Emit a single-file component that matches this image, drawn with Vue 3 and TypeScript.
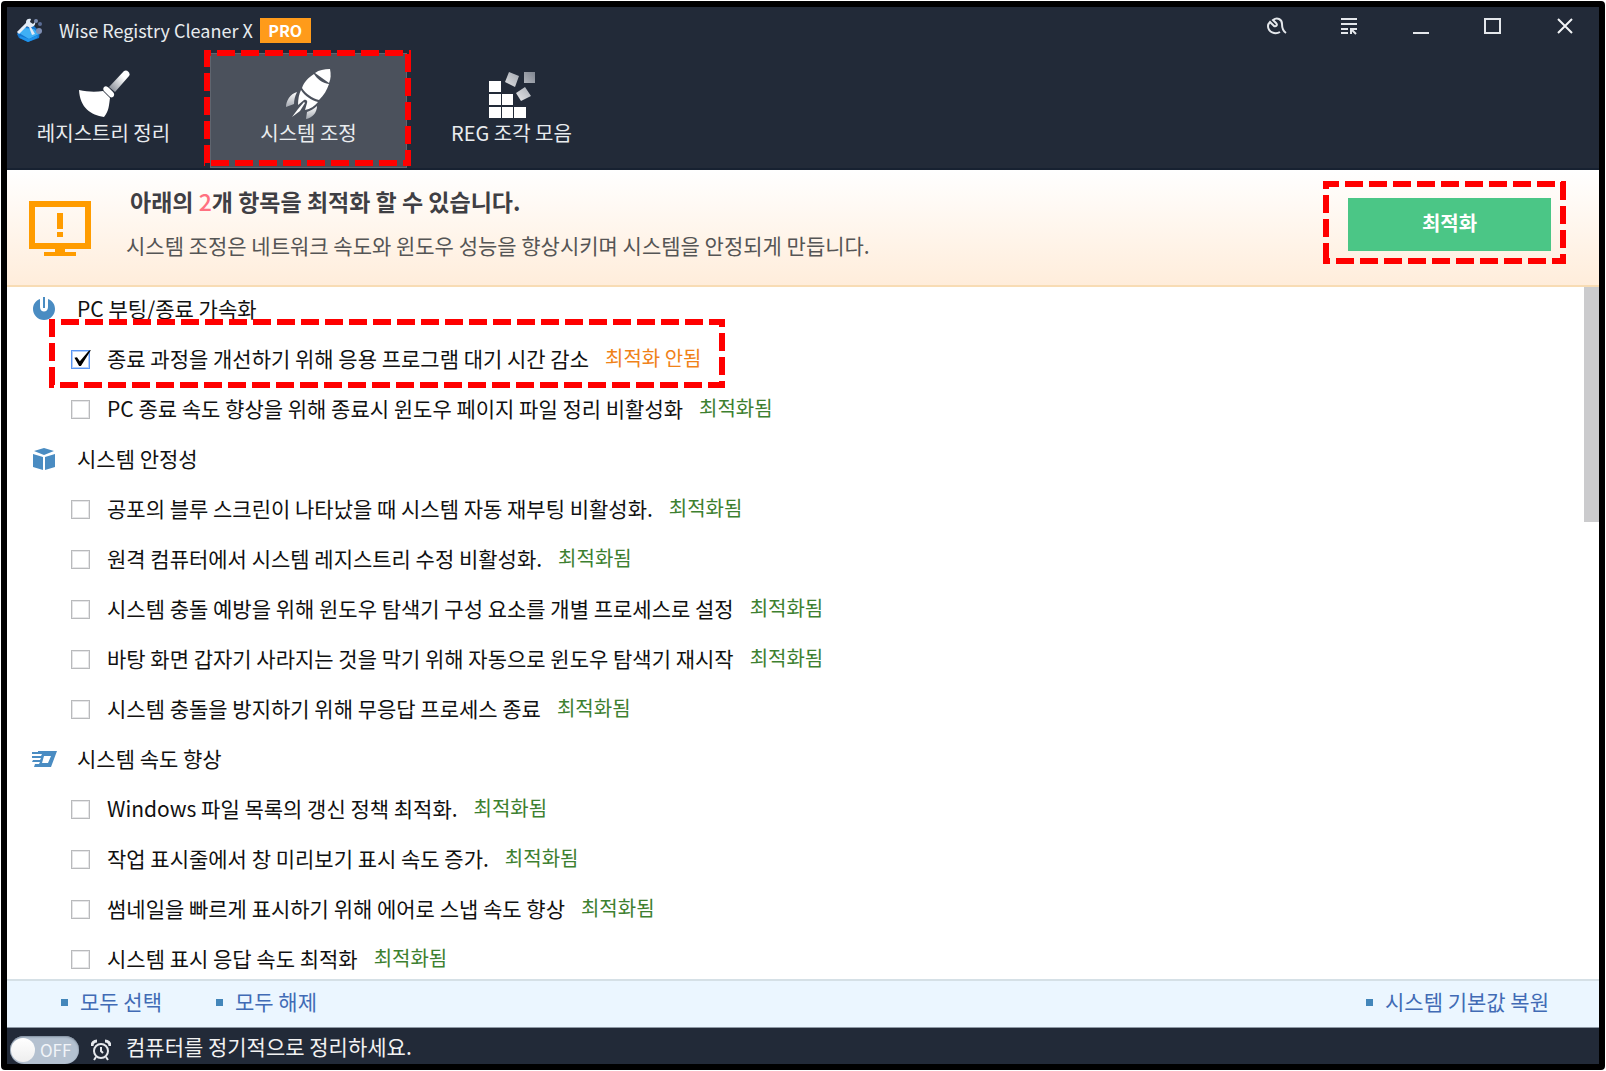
<script setup lang="ts">
import { ref } from 'vue'

interface Tweak {
  label: string
  checked: boolean
  done: boolean
  marked?: boolean
}
interface Group {
  title: string
  icon: 'power' | 'box' | 'speed'
  tweaks: Tweak[]
}

const tweak = (label: string): Tweak => ({ label, checked: false, done: true })

const groups = ref<Group[]>([
  {
    title: 'PC 부팅/종료 가속화',
    icon: 'power',
    tweaks: [
      { label: '종료 과정을 개선하기 위해 응용 프로그램 대기 시간 감소', checked: true, done: false, marked: true },
      tweak('PC 종료 속도 향상을 위해 종료시 윈도우 페이지 파일 정리 비활성화'),
    ],
  },
  {
    title: '시스템 안정성',
    icon: 'box',
    tweaks: [
      tweak('공포의 블루 스크린이 나타났을 때 시스템 자동 재부팅 비활성화.'),
      tweak('원격 컴퓨터에서 시스템 레지스트리 수정 비활성화.'),
      tweak('시스템 충돌 예방을 위해 윈도우 탐색기 구성 요소를 개별 프로세스로 설정'),
      tweak('바탕 화면 갑자기 사라지는 것을 막기 위해 자동으로 윈도우 탐색기 재시작'),
      tweak('시스템 충돌을 방지하기 위해 무응답 프로세스 종료'),
    ],
  },
  {
    title: '시스템 속도 향상',
    icon: 'speed',
    tweaks: [
      tweak('Windows 파일 목록의 갱신 정책 최적화.'),
      tweak('작업 표시줄에서 창 미리보기 표시 속도 증가.'),
      tweak('썸네일을 빠르게 표시하기 위해 에어로 스냅 속도 향상'),
      tweak('시스템 표시 응답 속도 최적화'),
    ],
  },
])

const scheduled = ref(false)

function setAll(value: boolean) {
  groups.value.forEach((g) => g.tweaks.forEach((t) => (t.checked = value)))
}
</script>

<template>
  <div class="window">
    <header class="head">
      <div class="titlebar">
        <svg class="logo" viewBox="0 0 26 26" aria-hidden="true">
          <path d="M1 17l5-7 12-1 6 6-1 6-11 4-9-4z" fill="#1677cf" />
          <path d="M3 16l6-5 9 1 5 5-10 5z" fill="#3fb0f5" />
          <path d="M4 19l9 3 9-4-1 3-9 4-8-4z" fill="#1f93ea" />
          <path d="M2 16L12 6" fill="none" stroke="#e6eef8" stroke-width="3" />
          <path d="M10 5c0-3 3-4 5-3l-1 3 3 2 2-2c1 3-2 5-4 5l4 7-3 1-3-8c-2 0-3-2-3-5z" fill="#e2ebf6" />
          <circle cx="20" cy="4" r="2" fill="#7b8cb0" />
          <circle cx="24" cy="7" r="2" fill="#5a6c94" />
          <circle cx="23" cy="14" r="3" fill="#7f8fb4" />
        </svg>
        <h1 class="app-name">Wise Registry Cleaner X</h1>
        <span class="pro">PRO</span>
        <div class="controls">
          <button type="button" aria-label="도구">
            <svg viewBox="0 0 20 18" fill="none" stroke="#e4e7eb" stroke-width="2">
              <path d="M13 15C8 18 1 15 1 9c0-2 1-3 2-4l4 4c2 1 4-1 2-3L6 3c4-3 9-1 9 4 0 3 1 7 4 9" />
            </svg>
          </button>
          <button type="button" aria-label="메뉴">
            <svg viewBox="0 0 20 18" fill="none" stroke="#e4e7eb" stroke-width="2">
              <path d="M2 2h16M2 7h16M2 12h7M2 16h7M12 17v-5h6M12 12l5 5" />
            </svg>
          </button>
          <button type="button" aria-label="최소화">
            <svg viewBox="0 0 20 18" fill="none" stroke="#e4e7eb" stroke-width="2"><path d="M2 16h16" /></svg>
          </button>
          <button type="button" aria-label="최대화">
            <svg viewBox="0 0 20 18" fill="none" stroke="#e4e7eb" stroke-width="2"><path d="M2 2h15v14H2z" /></svg>
          </button>
          <button type="button" aria-label="닫기">
            <svg viewBox="0 0 20 18" fill="none" stroke="#f2f4f6" stroke-width="2"><path d="M3 2l14 14M17 2L3 16" /></svg>
          </button>
        </div>
      </div>

      <nav class="tabs">
        <button type="button" class="tab">
          <svg class="tab-icon" viewBox="0 0 52 50" aria-hidden="true">
            <defs>
              <linearGradient id="handle" x1="1" y1="0" x2="0" y2="1">
                <stop offset="0.3" stop-color="#fff" />
                <stop offset="1" stop-color="#777d88" />
              </linearGradient>
            </defs>
            <path d="M46 2c3-2 7 2 5 5L37 23l-6-5z" fill="url(#handle)" />
            <path d="M26 18c2-2 4 0 5 1l4 4c1 1 2 3 0 5-2 1-3 0-4-1l-5-5c-1-1-1-3 0-4z" fill="#fff" />
            <path d="M1 21c9 2 17 2 24 1l7 7c-1 7-1 13-6 19C13 46 2 39 1 21z" fill="#fff" />
          </svg>
          <span>레지스트리 정리</span>
        </button>
        <button type="button" class="tab active">
          <svg class="tab-icon" viewBox="0 0 52 50" aria-hidden="true">
            <defs>
              <linearGradient id="fin" x1="0" y1="0" x2="0" y2="1">
                <stop offset="0" stop-color="#fff" />
                <stop offset="1" stop-color="#a2a7af" />
              </linearGradient>
            </defs>
            <path d="M47 0c-6 0-11 1-15 4l14 10c2-4 2-9 1-14z" fill="#fff" />
            <path d="M31 5c-6 4-10 8-12 14 4 6 10 10 17 12 5-5 8-10 10-16C39 14 34 10 31 5z" fill="#fff" />
            <path d="M18 21c-2 4-3 9-3 15l6-5c2-1 4 1 3 3l-2 7c5-1 10-4 13-8-7-2-13-6-17-12z" fill="#fff" />
            <path d="M14 23C7 25 3 32 3 38l8-3c0-4 1-8 3-12z" fill="url(#fin)" />
            <path d="M34 37c-3 3-7 5-10 6l-1 7c6-1 11-6 11-13z" fill="url(#fin)" />
            <path d="M21 33l-6 7-6 8 8-6 5-8z" fill="#fff" />
          </svg>
          <span>시스템 조정</span>
          <svg class="marker tab-marker" aria-hidden="true">
            <line x1="0" y1="3" x2="100%" y2="3" stroke-dashoffset="-13" />
            <line x1="0" y1="3" x2="0" y2="100%" class="right" stroke-dashoffset="-1" />
            <line x1="0" y1="100%" x2="100%" y2="100%" class="bottom" stroke-dashoffset="-7" />
            <line x1="3" y1="0" x2="3" y2="100%" stroke-dashoffset="-23" />
          </svg>
        </button>
        <button type="button" class="tab">
          <svg class="tab-icon" viewBox="0 0 52 50" aria-hidden="true">
            <defs>
              <linearGradient id="block" x1="0" y1="1" x2="1" y2="0">
                <stop offset="0" stop-color="#fff" />
                <stop offset="1" stop-color="#7f8590" />
              </linearGradient>
            </defs>
            <path d="M3 12h12v11H3zM3 25h12v11H3zM16 25h11v11H16zM3 38h12v11H3zM16 38h11v11H16zM28 38h12v11H28z" fill="#fff" />
            <path d="M23 3l10 4-4 11-10-5zM30 24l9-6 6 9-10 5zM38 3h11v11H38z" fill="url(#block)" />
          </svg>
          <span>REG 조각 모음</span>
        </button>
      </nav>
    </header>

    <section class="banner">
      <svg class="monitor" viewBox="0 0 64 56" fill="#ff9c00" aria-hidden="true">
        <path fill-rule="evenodd" d="M1 1h62v48H37v3h11v4H16v-4h11v-3H1zM7 7v36h50V7z" />
        <path d="M29 13h6v16h-6zM29 32h6v5h-6z" />
      </svg>
      <div class="message">
        <h2>아래의 <em>2</em>개 항목을 최적화 할 수 있습니다.</h2>
        <p>시스템 조정은 네트워크 속도와 윈도우 성능을 향상시키며 시스템을 안정되게 만듭니다.</p>
      </div>
      <div class="action">
        <button type="button" class="optimize">최적화</button>
        <svg class="marker action-marker" aria-hidden="true">
          <line x1="0" y1="3" x2="100%" y2="3" stroke-dashoffset="-22" />
          <line x1="0" y1="0" x2="0" y2="100%" class="right" stroke-dashoffset="-1" />
          <line x1="0" y1="100%" x2="100%" y2="100%" class="bottom" stroke-dashoffset="-13" />
          <line x1="3" y1="0" x2="3" y2="100%" stroke-dashoffset="-14" />
        </svg>
      </div>
    </section>

    <main class="body">
      <div class="list">
        <template v-for="(group, g) in groups" :key="group.title">
          <div class="row group">
            <svg class="group-icon" viewBox="0 0 26 24" fill="#4a8cc2" aria-hidden="true">
              <template v-if="group.icon === 'power'">
                <path d="M9 2v8c0 6 8 6 8 0V2c5 2 7 6 7 10a11 11 0 0 1-22 0C2 8 4 4 9 2z" />
                <path d="M12 0h2v11h-2z" />
              </template>
              <template v-else-if="group.icon === 'box'">
                <path d="M13 1l10 3-10 4L3 4zM2 7l10 3v13L2 20zM24 7l-10 3v13l10-3z" />
              </template>
              <template v-else>
                <path fill-rule="evenodd" d="M7 4h19l-6 16H3l1-3h4l1-2H1l1-2h7l1-2H1V9h9l1-2H1V5h6zM13 9l-2 7h6l3-7z" />
              </template>
            </svg>
            <h3>{{ group.title }}</h3>
          </div>
          <div v-for="(item, i) in group.tweaks" :key="item.label" class="row item">
            <input :id="`tweak-${g}-${i}`" v-model="item.checked" type="checkbox" class="check" />
            <label :for="`tweak-${g}-${i}`">{{ item.label }}</label>
            <span class="state" :class="{ pending: !item.done }">{{ item.done ? '최적화됨' : '최적화 안됨' }}</span>
            <svg v-if="item.marked" class="marker row-marker" aria-hidden="true">
              <line x1="0" y1="3" x2="100%" y2="3" stroke-dashoffset="-12" />
              <line x1="0" y1="0" x2="0" y2="100%" class="right" stroke-dashoffset="-14" />
              <line x1="0" y1="100%" x2="100%" y2="100%" class="bottom" stroke-dashoffset="-11" />
              <line x1="3" y1="0" x2="3" y2="100%" stroke-dashoffset="0" />
            </svg>
          </div>
        </template>
      </div>
      <div class="scroll"><div class="thumb"></div></div>
    </main>

    <div class="links">
      <a href="#all" @click.prevent="setAll(true)">모두 선택</a>
      <a href="#none" @click.prevent="setAll(false)">모두 해제</a>
      <a href="#restore" class="restore">시스템 기본값 복원</a>
    </div>

    <footer class="status">
      <label class="toggle">
        <input v-model="scheduled" type="checkbox" role="switch" aria-label="예약 정리" />
        <span>OFF</span>
      </label>
      <svg class="alarm" viewBox="0 0 20 22" fill="none" stroke="#e6e9ed" stroke-width="2" aria-hidden="true">
        <circle cx="10" cy="12" r="7" />
        <path d="M10 8v4l2 2M5 18l-2 3M15 18l2 3" />
        <path d="M1 7c0-3 2-5 5-5M19 7c0-3-2-5-5-5" stroke-width="3" />
      </svg>
      <span>컴퓨터를 정기적으로 정리하세요.</span>
    </footer>
  </div>
</template>

<style>
body {
  margin: 0;
  background: #fff;
}
</style>

<style scoped>
* {
  box-sizing: border-box;
}
.window {
  display: flex;
  flex-direction: column;
  height: calc(100vh - 2px);
  margin: 1px;
  border: 6px solid #000;
  border-radius: 4px;
  background: #fff;
  color: #111;
  font: 21px/30px "Noto Sans CJK KR", sans-serif;
  white-space: nowrap;
}
button {
  padding: 0;
  border: 0;
  background: none;
  color: inherit;
  font: inherit;
}
h1, h2, h3, p {
  margin: 0;
  font: inherit;
}

.head {
  flex: none;
  background: #222a38;
  border-bottom: 2px solid #172131;
  color: #e9ecef;
}
.titlebar {
  display: flex;
  align-items: center;
  height: 46px;
  padding-left: 9px;
}
.logo {
  width: 26px;
  height: 26px;
}
.app-name {
  margin-left: 17px;
  font-size: 18px;
}
.pro {
  width: 51px;
  margin-left: 7px;
  background: #ff9b1a;
  color: #fff;
  font: bold 16px/25px "Noto Sans CJK KR", sans-serif;
  text-align: center;
}
.controls {
  display: flex;
  gap: 4px;
  align-self: flex-start;
  margin-left: auto;
}
.controls button {
  display: grid;
  place-items: center;
  width: 68px;
  height: 38px;
}
.controls svg {
  width: 20px;
  height: 18px;
}

.tabs {
  display: flex;
  gap: 6px;
}
.tab {
  position: relative;
  display: flex;
  flex-direction: column;
  align-items: center;
  width: 197px;
  height: 115px;
  padding-top: 16px;
  font-size: 20px;
  line-height: 28px;
}
.tab:first-child {
  padding-right: 4px;
}
.tab.active {
  background: #4b515c;
  box-shadow: inset 0 0 0 1px #5f656f;
}
.tab-icon {
  width: 52px;
  height: 50px;
}

.marker {
  position: absolute;
  overflow: visible;
  pointer-events: none;
  stroke: #f00;
  stroke-width: 6px;
  stroke-dasharray: 18 6;
}
.marker .right {
  transform: translateX(calc(100% - 3px));
}
.marker .bottom {
  transform: translateY(-3px);
}
.tab-marker {
  top: -3px;
  left: -6px;
  width: 207px;
  height: 116px;
}

.banner {
  display: flex;
  flex: none;
  align-items: flex-start;
  height: 117px;
  padding: 14px 48px 0 21px;
  border-bottom: 2px solid #f8dcb4;
  background: linear-gradient(#fff, #ffeddb);
}
.monitor {
  width: 64px;
  height: 56px;
  margin-top: 16px;
}
.message {
  display: flex;
  flex-direction: column;
  gap: 14px;
  padding: 2px 0 0 34px;
  color: #555;
}
.message h2 {
  padding-left: 4px;
  color: #3f3f44;
  font-size: 23px;
  font-weight: bold;
}
.message em {
  color: #ff7080;
  font-style: normal;
  font-weight: 500;
}
.action {
  position: relative;
  margin: 14px 0 0 auto;
}
.optimize {
  display: block;
  width: 203px;
  height: 53px;
  padding-bottom: 4px;
  background: #4bc686;
  color: #fff;
  font-size: 20px;
  font-weight: bold;
}
.action-marker {
  top: -17px;
  left: -25px;
  width: 243px;
  height: 83px;
}

.body {
  display: flex;
  flex: 1;
  min-height: 0;
}
.list {
  display: flex;
  flex: 1;
  flex-direction: column;
  gap: 6px;
  overflow: hidden;
}
.row {
  position: relative;
  display: flex;
  flex: none;
  align-items: center;
  height: 44px;
}
.row h3,
.row label,
.state {
  padding-bottom: 2px;
}
.group {
  padding-left: 24px;
}
.group-icon {
  width: 26px;
  height: 24px;
  margin-right: 20px;
}
.item {
  align-self: flex-start;
  padding-left: 64px;
}
.check {
  position: relative;
  width: 19px;
  height: 19px;
  margin: 1px 17px 0 0;
  appearance: none;
  border: 1px solid #b9babc;
  background: #fff;
  outline: 1px solid #e6e6e8;
  outline-offset: -2px;
}
.check:checked {
  border-color: #5b97f5;
  outline-color: #b5d0fb;
}
.check:checked::after {
  content: "";
  position: absolute;
  inset: -1px -2px 1px 1px;
  background: #000;
  clip-path: polygon(8% 46%, 22% 42%, 38% 66%, 88% 4%, 100% 0, 44% 94%, 34% 94%);
}
.state {
  margin-left: 16px;
  color: #3d8030;
  font-size: 20px;
}
.state.pending {
  color: #f08218;
}
.row-marker {
  top: -18px;
  left: 42px;
  width: 676px;
  height: 69px;
}
.scroll {
  width: 15px;
  background: #fff;
}
.thumb {
  height: 34%;
  background: #cbcbcd;
}

.links {
  display: flex;
  flex: none;
  gap: 54px;
  height: 49px;
  padding: 5px 50px 0 54px;
  border-top: 2px solid #d5e0e6;
  border-bottom: 1px solid #8e99a5;
  background: #ebf6ff;
}
.links a {
  display: flex;
  gap: 12px;
  align-items: center;
  height: 30px;
  color: #416bb5;
  text-decoration: none;
}
.links a::before {
  content: "";
  width: 7px;
  height: 7px;
  margin-top: 3px;
  background: #4386ba;
}
.restore {
  margin-left: auto;
}

.status {
  display: flex;
  flex: none;
  align-items: flex-start;
  height: 36px;
  padding: 3px 0 0 3px;
  background: #222a38;
  color: #f2f2f2;
}
.toggle {
  display: flex;
  align-items: center;
  width: 69px;
  height: 28px;
  margin-top: 5px;
  padding-left: 1px;
  border-radius: 14px;
  background: #b4c1d0;
  box-shadow: inset 0 1px 2px #7f8c9c;
  color: #f1f4f8;
  font-size: 17px;
}
.toggle input {
  width: 24px;
  height: 24px;
  margin: 0 5px 0 0;
  appearance: none;
  border-radius: 50%;
  background: linear-gradient(#fff, #eee);
}
.alarm {
  width: 20px;
  height: 22px;
  margin: 8px 15px 0 12px;
}
</style>
